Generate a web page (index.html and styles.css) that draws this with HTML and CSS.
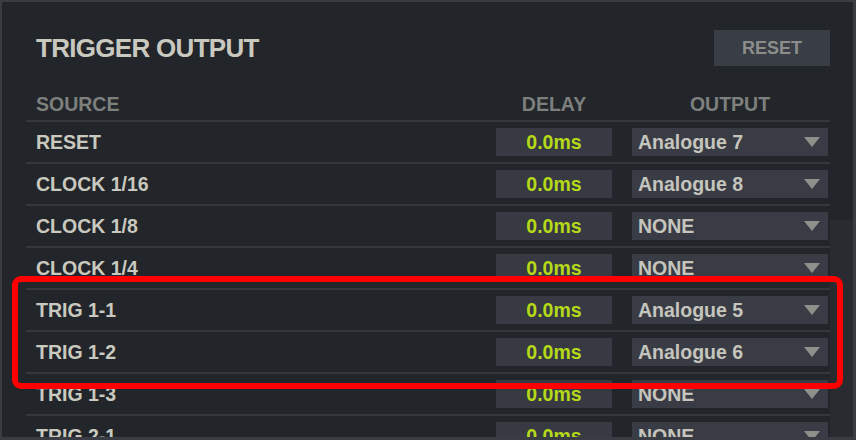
FILE: index.html
```html
<!DOCTYPE html>
<html>
<head>
<meta charset="utf-8">
<link rel="stylesheet" href="styles.css">
</head>
<body>
<div class="panel">
  <div class="topbar">
    <h1 class="title">TRIGGER OUTPUT</h1>
    <button class="reset-btn">RESET</button>
  </div>
  <div class="table">
    <div class="row head">
      <span class="h-src">SOURCE</span>
      <span class="h-delay">DELAY</span>
      <span class="h-out">OUTPUT</span>
    </div>
    <div class="row"><span class="src">RESET</span><span class="delay">0.0ms</span><div class="select"><span>Analogue 7</span><svg class="caret" width="16" height="10" viewBox="0 0 16 10"><polygon points="0,0 16,0 8,10"/></svg></div></div>
    <div class="row"><span class="src">CLOCK 1/16</span><span class="delay">0.0ms</span><div class="select"><span>Analogue 8</span><svg class="caret" width="16" height="10" viewBox="0 0 16 10"><polygon points="0,0 16,0 8,10"/></svg></div></div>
    <div class="row"><span class="src">CLOCK 1/8</span><span class="delay">0.0ms</span><div class="select"><span>NONE</span><svg class="caret" width="16" height="10" viewBox="0 0 16 10"><polygon points="0,0 16,0 8,10"/></svg></div></div>
    <div class="row"><span class="src">CLOCK 1/4</span><span class="delay">0.0ms</span><div class="select"><span>NONE</span><svg class="caret" width="16" height="10" viewBox="0 0 16 10"><polygon points="0,0 16,0 8,10"/></svg></div></div>
    <div class="row"><span class="src">TRIG 1-1</span><span class="delay">0.0ms</span><div class="select"><span>Analogue 5</span><svg class="caret" width="16" height="10" viewBox="0 0 16 10"><polygon points="0,0 16,0 8,10"/></svg></div></div>
    <div class="row"><span class="src">TRIG 1-2</span><span class="delay">0.0ms</span><div class="select"><span>Analogue 6</span><svg class="caret" width="16" height="10" viewBox="0 0 16 10"><polygon points="0,0 16,0 8,10"/></svg></div></div>
    <div class="row"><span class="src">TRIG 1-3</span><span class="delay">0.0ms</span><div class="select"><span>NONE</span><svg class="caret" width="16" height="10" viewBox="0 0 16 10"><polygon points="0,0 16,0 8,10"/></svg></div></div>
    <div class="row"><span class="src">TRIG 2-1</span><span class="delay">0.0ms</span><div class="select"><span>NONE</span><svg class="caret" width="16" height="10" viewBox="0 0 16 10"><polygon points="0,0 16,0 8,10"/></svg></div></div>
  </div>
  <div class="scroll-track"></div>
</div>
<div class="highlight"></div>
</body>
</html>
```
FILE: styles.css
```css
html, body {
  margin: 0;
  padding: 0;
}
body {
  width: 856px;
  height: 440px;
  overflow: hidden;
  background: #393c43;
  font-family: "Liberation Sans", Arial, sans-serif;
  font-weight: bold;
  position: relative;
}
.panel {
  margin: 2px 3px 0 2px;
  height: 435px;
  background: #22252a;
  overflow: hidden;
  position: relative;
  box-sizing: border-box;
  padding: 0 23px 0 24px;
}
.topbar {
  display: flex;
  align-items: center;
  justify-content: space-between;
  padding: 28px 0 0 10px;
}
.title {
  margin: 0;
  font-size: 26px;
  line-height: 26px;
  letter-spacing: -0.7px;
  color: #c9c9c0;
  font-weight: bold;
}
.reset-btn {
  width: 116px;
  height: 36px;
  border: 0;
  padding: 0;
  background: #393d46;
  color: #8b8d8a;
  font-family: "Liberation Sans", Arial, sans-serif;
  font-weight: bold;
  font-size: 18px;
}
.row {
  display: flex;
  align-items: center;
  height: 40px;
  border-bottom: 2px solid #34373e;
  padding: 0 2px 0 10px;
}
.row.head {
  height: 48px;
  align-items: flex-end;
  padding-bottom: 6px;
  line-height: 19px;
  font-size: 19.5px;
  color: #7e807e;
}
.h-src {
  flex: 1;
}
.h-delay {
  width: 116px;
  margin-right: 20px;
  text-align: center;
}
.h-out {
  width: 196px;
  text-align: center;
}
.src {
  flex: 1;
  font-size: 19.5px;
  color: #c9c9bf;
}
.delay {
  width: 116px;
  height: 28px;
  margin-right: 20px;
  background: #373a42;
  color: #b5d919;
  font-size: 19.5px;
  line-height: 28px;
  text-align: center;
}
.select {
  width: 196px;
  height: 28px;
  box-sizing: border-box;
  padding: 0 8px 0 6px;
  background: #393c45;
  display: flex;
  align-items: center;
  justify-content: space-between;
  color: #c5c5bd;
  font-size: 19.5px;
}
.caret {
  display: block;
  fill: #8e908b;
}
.scroll-track {
  position: absolute;
  right: 0;
  top: 218px;
  bottom: 0;
  width: 23px;
  background: #292b30;
}
.highlight {
  position: absolute;
  left: 12px;
  top: 276px;
  width: 831px;
  height: 113px;
  box-sizing: border-box;
  border: 6px solid #fe0000;
  border-radius: 9px;
}
```
